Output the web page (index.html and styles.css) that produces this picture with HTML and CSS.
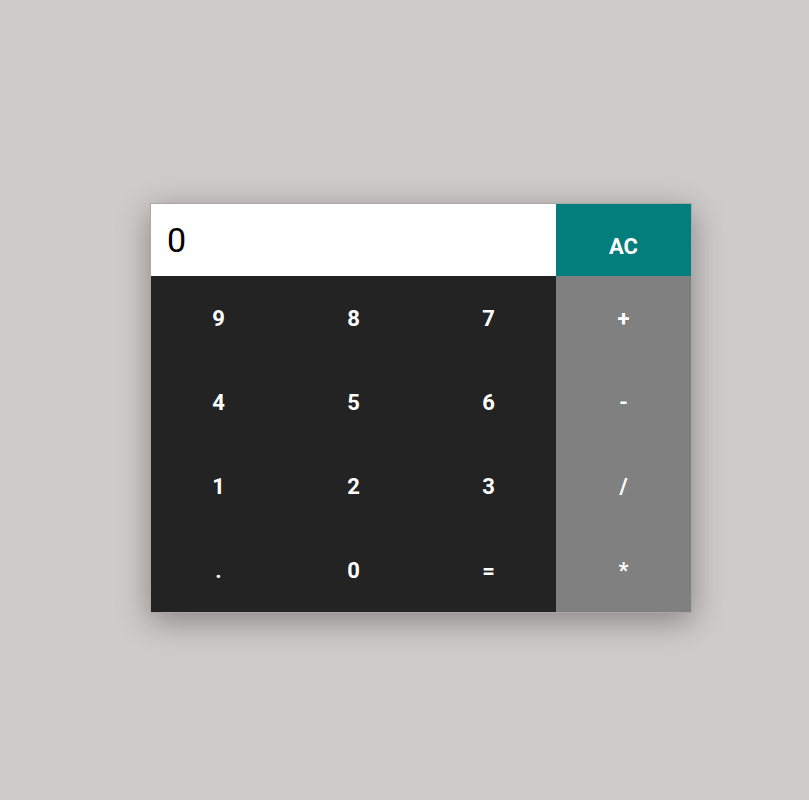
FILE: index.html
```html
<!DOCTYPE html>
<html>
<head>
<meta charset="utf-8">
<link rel="stylesheet" href="styles.css">
</head>
<body>
<div class="calc">
  <div class="display">0</div>
  <div class="btn ac">AC</div>
  <div class="btn num">9</div>
  <div class="btn num">8</div>
  <div class="btn num">7</div>
  <div class="btn op">+</div>
  <div class="btn num">4</div>
  <div class="btn num">5</div>
  <div class="btn num">6</div>
  <div class="btn op">-</div>
  <div class="btn num">1</div>
  <div class="btn num">2</div>
  <div class="btn num">3</div>
  <div class="btn op">/</div>
  <div class="btn num">.</div>
  <div class="btn num">0</div>
  <div class="btn num">=</div>
  <div class="btn op">*</div>
</div>
</body>
</html>
```
FILE: styles.css
```css
html, body {
  margin: 0;
  padding: 0;
  background: #cfcbcb;
  height: 100%;
}
body {
  padding: 203px 0 0 150px;
  box-sizing: border-box;
  font-family: Roboto, "Liberation Sans", sans-serif;
}
.calc {
  display: grid;
  grid-template-columns: repeat(4, 135px);
  grid-template-rows: 72px repeat(4, 84px);
  width: 540px;
  border: 1px solid #a9a7a7;
  box-shadow: 0 8px 30px rgba(0, 0, 0, 0.35);
}
.display {
  grid-column: span 3;
  background: #fff;
  color: #000;
  font-size: 34px;
  display: flex;
  align-items: center;
  padding-left: 16px;
}
.btn {
  display: flex;
  align-items: center;
  justify-content: center;
  color: #fff;
  font-weight: 700;
  font-size: 22px;
}
.ac {
  background: #047e7c;
  padding-top: 12px;
  box-sizing: border-box;
}
.num {
  background: #232323;
}
.op {
  background: #808080;
}
```
